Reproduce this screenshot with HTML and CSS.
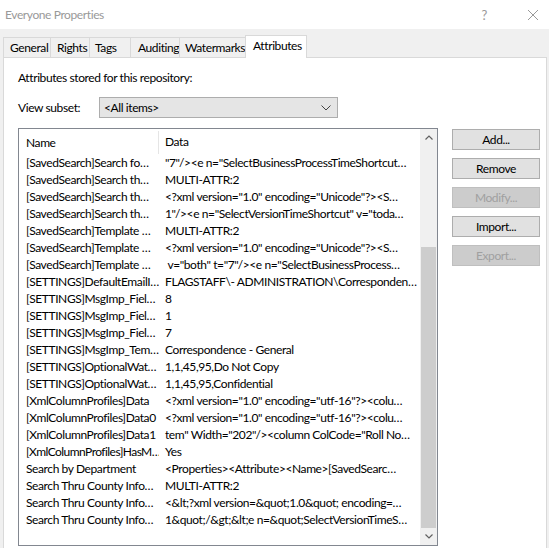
FILE: index.html
```html
<!DOCTYPE html>
<html lang="en">
<head>
    <meta charset="UTF-8">
    <title>Everyone Properties</title>
    <link rel="stylesheet" href="styles.css">
</head>
<body>
    <div class="window">
        <!-- Title bar -->
        <div class="titlebar">
            <span class="title">Everyone Properties</span>
            <span class="help">?</span>
            <svg class="close" width="12" height="12" viewBox="0 0 12 12"><path d="M1 1L11 11M11 1L1 11" stroke="#999" stroke-width="1" fill="none"/></svg>
        </div>

        <!-- Tabs -->
        <div class="tabs">
            <div class="tab t-general">General</div>
            <div class="tab t-rights">Rights</div>
            <div class="tab t-tags">Tags</div>
            <div class="tab t-auditing">Auditing</div>
            <div class="tab t-water">Watermarks</div>
            <div class="tab active t-attr">Attributes</div>
        </div>

        <div class="panel">
            <div class="intro">Attributes stored for this repository:</div>

            <div class="subset">
                <span class="subset-label">View subset:</span>
                <div class="combo">
                    <span>&lt;All items&gt;</span>
                    <svg width="10" height="6" viewBox="0 0 10 6"><path d="M0.5 0.5L5 5L9.5 0.5" stroke="#444" fill="none"/></svg>
                </div>
            </div>

            <div class="main">
                <div class="listbox">
                    <div class="grid">
                        <div class="head">
                            <div class="c-name">Name</div>
                            <div class="c-data">Data</div>
                        </div>
                        <div class="row"><div class="c-name">[SavedSearch]Search fo…</div><div class="c-data">"7"/&gt;&lt;e n="SelectBusinessProcessTimeShortcut…</div></div>
                        <div class="row"><div class="c-name">[SavedSearch]Search th…</div><div class="c-data">MULTI-ATTR:2</div></div>
                        <div class="row"><div class="c-name">[SavedSearch]Search th…</div><div class="c-data">&lt;?xml version="1.0" encoding="Unicode"?&gt;&lt;S…</div></div>
                        <div class="row"><div class="c-name">[SavedSearch]Search th…</div><div class="c-data">1"/&gt;&lt;e n="SelectVersionTimeShortcut" v="toda…</div></div>
                        <div class="row"><div class="c-name">[SavedSearch]Template …</div><div class="c-data">MULTI-ATTR:2</div></div>
                        <div class="row"><div class="c-name">[SavedSearch]Template …</div><div class="c-data">&lt;?xml version="1.0" encoding="Unicode"?&gt;&lt;S…</div></div>
                        <div class="row"><div class="c-name">[SavedSearch]Template …</div><div class="c-data">&nbsp;v="both" t="7"/&gt;&lt;e n="SelectBusinessProcess…</div></div>
                        <div class="row"><div class="c-name">[SETTINGS]DefaultEmailI…</div><div class="c-data">FLAGSTAFF\- ADMINISTRATION\Corresponden…</div></div>
                        <div class="row"><div class="c-name">[SETTINGS]MsgImp_Fiel…</div><div class="c-data">8</div></div>
                        <div class="row"><div class="c-name">[SETTINGS]MsgImp_Fiel…</div><div class="c-data">1</div></div>
                        <div class="row"><div class="c-name">[SETTINGS]MsgImp_Fiel…</div><div class="c-data">7</div></div>
                        <div class="row"><div class="c-name">[SETTINGS]MsgImp_Tem…</div><div class="c-data">Correspondence - General</div></div>
                        <div class="row"><div class="c-name">[SETTINGS]OptionalWat…</div><div class="c-data">1,1,45,95,Do Not Copy</div></div>
                        <div class="row"><div class="c-name">[SETTINGS]OptionalWat…</div><div class="c-data">1,1,45,95,Confidential</div></div>
                        <div class="row"><div class="c-name">[XmlColumnProfiles]Data</div><div class="c-data">&lt;?xml version="1.0" encoding="utf-16"?&gt;&lt;colu…</div></div>
                        <div class="row"><div class="c-name">[XmlColumnProfiles]Data0</div><div class="c-data">&lt;?xml version="1.0" encoding="utf-16"?&gt;&lt;colu…</div></div>
                        <div class="row"><div class="c-name">[XmlColumnProfiles]Data1</div><div class="c-data">tem" Width="202"/&gt;&lt;column ColCode="Roll No…</div></div>
                        <div class="row"><div class="c-name tight">[XmlColumnProfiles]HasM…</div><div class="c-data">Yes</div></div>
                        <div class="row"><div class="c-name">Search by Department</div><div class="c-data">&lt;Properties&gt;&lt;Attribute&gt;&lt;Name&gt;[SavedSearc…</div></div>
                        <div class="row"><div class="c-name">Search Thru County Info…</div><div class="c-data">MULTI-ATTR:2</div></div>
                        <div class="row"><div class="c-name">Search Thru County Info…</div><div class="c-data">&lt;&amp;lt;?xml version=&amp;quot;1.0&amp;quot; encoding=…</div></div>
                        <div class="row"><div class="c-name">Search Thru County Info…</div><div class="c-data">1&amp;quot;/&amp;gt;&amp;lt;e n=&amp;quot;SelectVersionTimeS…</div></div>
                    </div>
                    <div class="scrollbar">
                        <div class="arrow">
                            <svg width="8" height="5" viewBox="0 0 8 5"><path d="M0.5 4.5L4 1L7.5 4.5" stroke="#606060" stroke-width="1.2" fill="none"/></svg>
                        </div>
                        <div class="track"></div>
                        <div class="thumb"></div>
                        <div class="arrow">
                            <svg width="8" height="5" viewBox="0 0 8 5"><path d="M0.5 0.5L4 4L7.5 0.5" stroke="#606060" stroke-width="1.2" fill="none"/></svg>
                        </div>
                    </div>
                </div>

                <div class="buttons">
                    <div class="btn">Add...</div>
                    <div class="btn">Remove</div>
                    <div class="btn disabled">Modify...</div>
                    <div class="btn">Import...</div>
                    <div class="btn disabled">Export...</div>
                </div>
            </div>
        </div>
    </div>
</body>
</html>
```

FILE: styles.css
```css
html, body {
    margin: 0;
    padding: 0;
    overflow: hidden;
}
body {
    font-family: Lato, "Noto Sans", sans-serif;
    font-size: 12px;
    letter-spacing: -0.4px;
    color: #000;
    background: #f0f0f0;
}
.window {
    width: 549px;
    height: 548px;
    background: #f0f0f0;
}
.titlebar {
    height: 29px;
    background: #fff;
    display: flex;
    align-items: center;
    padding-left: 5px;
}
.title {
    color: #999;
    flex: 1;
}
.help {
    color: #999;
    font-size: 13px;
    margin-right: 40px;
}
.close {
    margin-right: 10px;
}
.tabs {
    display: flex;
    align-items: flex-end;
    height: 28px;
    padding-left: 3px;
}
.tab {
    height: 20px;
    line-height: 19px;
    border: 1px solid #d9d9d9;
    border-bottom: none;
    border-right: none;
    background: #f0f0f0;
    padding-left: 6px;
    box-sizing: border-box;
    white-space: nowrap;
}
.t-general { width: 47px; }
.t-rights { width: 39px; }
.t-tags { width: 41px; padding-left: 5px; }
.t-auditing { width: 49px; padding-left: 7px; }
.t-water { width: 66px; padding-left: 5px; }
.tab.active {
    width: 62px;
    height: 23px;
    line-height: 20px;
    background: #fff;
    border-right: 1px solid #d9d9d9;
    margin-bottom: -1px;
    position: relative;
    z-index: 1;
    padding-left: 7px;
}
.panel {
    margin-left: 3px;
    width: 544px;
    height: 500px;
    box-sizing: border-box;
    background: #fff;
    border: 1px solid #d9d9d9;
    padding: 12px 0 0 14px;
}
.intro {
    height: 16px;
    line-height: 16px;
}
.subset {
    display: flex;
    align-items: center;
    margin-top: 11px;
}
.subset-label {
    width: 81px;
}
.combo {
    width: 239px;
    height: 21px;
    box-sizing: border-box;
    border: 1px solid #adadad;
    background: #e5e5e5;
    display: flex;
    align-items: center;
    justify-content: space-between;
    padding: 0 6px 0 4px;
}
.main {
    display: flex;
    margin-top: 10px;
}
.listbox {
    width: 420px;
    height: 418px;
    box-sizing: border-box;
    border: 1px solid #828790;
    display: flex;
}
.grid {
    flex: 1;
    overflow: hidden;
}
.head {
    display: flex;
    height: 25px;
    align-items: center;
}
.head .c-name {
    border-right: 1px solid #e5e5e5;
    height: 23px;
    line-height: 23px;
    margin-top: 1px;
}
.row {
    display: flex;
    height: 17px;
    line-height: 17px;
}
.c-name {
    width: 140px;
    flex: none;
    box-sizing: border-box;
    padding-left: 7px;
    white-space: nowrap;
    overflow: hidden;
}
.c-name.tight {
    letter-spacing: -0.55px;
}
.c-data {
    flex: 1;
    padding-left: 6px;
    white-space: nowrap;
    overflow: hidden;
}
.scrollbar {
    width: 17px;
    display: flex;
    flex-direction: column;
    background: #f0f0f0;
}
.arrow {
    height: 17px;
    display: flex;
    align-items: center;
    justify-content: center;
}
.track {
    height: 101px;
}
.thumb {
    flex: 1;
    margin: 0 1px;
    background: #cdcdcd;
}
.buttons {
    margin-left: 14px;
    display: flex;
    flex-direction: column;
    gap: 8px;
    margin-top: 1px;
}
.btn {
    width: 88px;
    height: 21px;
    box-sizing: border-box;
    border: 1px solid #adadad;
    background: #e1e1e1;
    text-align: center;
    line-height: 19px;
}
.btn.disabled {
    background: #cccccc;
    border-color: #bfbfbf;
    color: #a0a0a0;
}
```
